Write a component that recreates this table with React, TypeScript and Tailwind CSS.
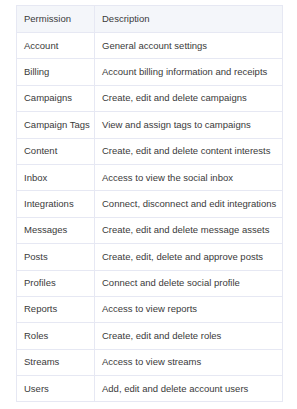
import React from "react";

const rows: [string, string][] = [
  ["Account", "General account settings"],
  ["Billing", "Account billing information and receipts"],
  ["Campaigns", "Create, edit and delete campaigns"],
  ["Campaign Tags", "View and assign tags to campaigns"],
  ["Content", "Create, edit and delete content interests"],
  ["Inbox", "Access to view the social inbox"],
  ["Integrations", "Connect, disconnect and edit integrations"],
  ["Messages", "Create, edit and delete message assets"],
  ["Posts", "Create, edit, delete and approve posts"],
  ["Profiles", "Connect and delete social profile"],
  ["Reports", "Access to view reports"],
  ["Roles", "Create, edit and delete roles"],
  ["Streams", "Access to view streams"],
  ["Users", "Add, edit and delete account users"],
];

export default function App() {
  return (
    <div
      className="w-[297px] h-[409px] bg-white pl-4 pt-[5px] text-[9.5px] text-[#3a3a3a]"
      style={{ fontFamily: '"Liberation Sans", Arial, sans-serif' }}
    >
      <div className="w-[267px] border border-[#e6e8f3] border-b-0">
        <div className="grid grid-cols-[78px_1fr] h-[27px] bg-[#f4f6fa] border-b border-[#e6e8f3]">
          <div className="flex items-center pl-[7px] border-r border-[#e6e8f3]">Permission</div>
          <div className="flex items-center pl-[7px]">Description</div>
        </div>
        {rows.map(([p, d]) => (
          <div key={p} className="grid grid-cols-[78px_1fr] h-[26.4px] border-b border-[#e6e8f3]">
            <div className="flex items-center pl-[7px] border-r border-[#e6e8f3] whitespace-nowrap">{p}</div>
            <div className="flex items-center pl-[7px] whitespace-nowrap">{d}</div>
          </div>
        ))}
      </div>
    </div>
  );
}
